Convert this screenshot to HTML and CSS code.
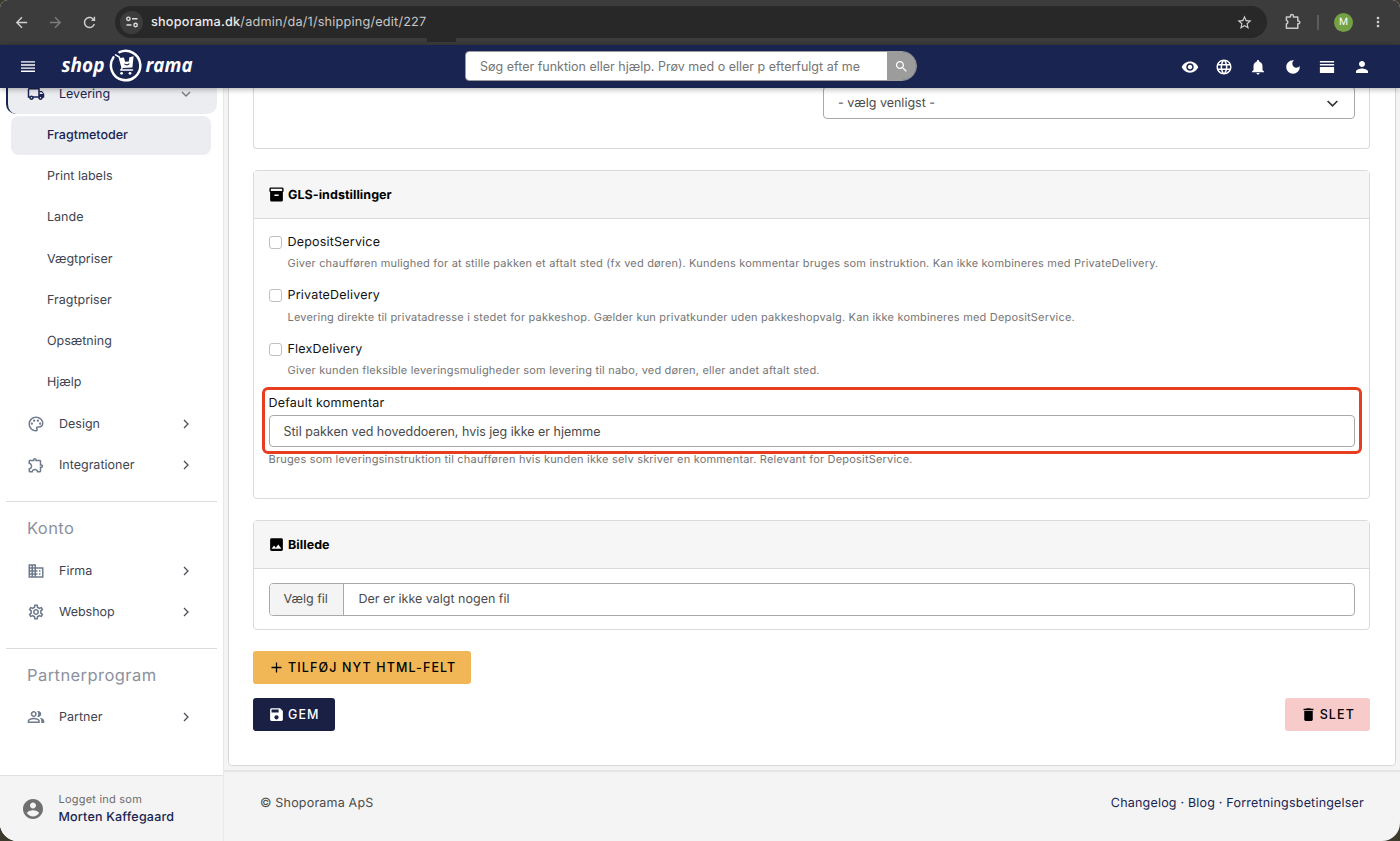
FILE: index.html
```html
<!DOCTYPE html>
<html lang="da">
<head>
    <meta charset="UTF-8">
    <meta name="viewport" content="width=device-width, initial-scale=1.0">
    <title>Shoporama</title>
    <link rel="stylesheet" href="styles.css">
</head>
<body>
<div class="window">
    <div class="browser-bar">
        <svg class="b-icon" viewBox="0 0 24 24"><path d="M20 11H7.83l5.59-5.59L12 4l-8 8 8 8 1.41-1.41L7.83 13H20v-2z"/></svg>
        <svg class="b-icon dim" viewBox="0 0 24 24"><path d="M12 4l-1.41 1.41L16.17 11H4v2h12.17l-5.58 5.59L12 20l8-8z"/></svg>
        <svg class="b-icon" viewBox="0 0 24 24"><path d="M17.65 6.35C16.2 4.9 14.21 4 12 4c-4.42 0-7.99 3.58-7.99 8s3.57 8 7.99 8c3.73 0 6.84-2.55 7.73-6h-2.08c-.82 2.33-3.04 4-5.65 4-3.31 0-6-2.69-6-6s2.69-6 6-6c1.66 0 3.14.69 4.22 1.78L14 10h6V4h-2v2.7z"/></svg>
        <div class="address">
            <span class="site-info">
                <svg viewBox="0 0 14 14"><g fill="none" stroke="#ddd" stroke-width="1.4"><circle cx="3.4" cy="3.8" r="1.7"/><path d="M7 3.8h5.5M1.5 10h5"/><circle cx="10.6" cy="10" r="1.7"/></g></svg>
            </span>
            <span class="url"><b>shoporama.dk</b>/admin/da/1/shipping/edit/227</span>
            <svg class="b-icon star" viewBox="0 0 24 24"><path d="M22 9.24l-7.19-.62L12 2 9.19 8.63 2 9.24l5.46 4.73L5.82 21 12 17.27 18.18 21l-1.63-7.03L22 9.24zM12 15.4l-3.76 2.27 1-4.28-3.32-2.88 4.38-.38L12 6.1l1.71 4.04 4.38.38-3.32 2.88 1 4.28L12 15.4z"/></svg>
            <span class="address-tab"></span>
        </div>
        <svg class="b-puzzle" viewBox="0 0 18 18"><path d="M2.4 4h4V2.9a1.5 1.5 0 0 1 3 0V4h4.4v4h.6a1.4 1.4 0 0 1 0 2.800h-.6v4.400H2.400v-4.300a1.900 1.900 0 0 0 0-3.700z" fill="none" stroke="#c9c9c9" stroke-width="1.500" stroke-linejoin="round"/></svg>
        <span class="b-divider"></span>
        <span class="avatar">M</span>
        <svg class="b-more" viewBox="0 0 24 24"><path d="M12 8c1.100 0 2-.9 2-2s-.9-2-2-2-2 .9-2 2 .9 2 2 2zm0 2c-1.100 0-2 .9-2 2s.9 2 2 2 2-.9 2-2-.9-2-2-2zm0 6c-1.100 0-2 .9-2 2s.9 2 2 2 2-.9 2-2-.9-2-2-2z"/></svg>
    </div>

    <header class="topbar">
        <svg class="menu-icon" viewBox="0 0 14 11"><path d="M0 .9h14M0 4h14M0 7.100h14M0 10.200h14" stroke="#fff" stroke-width="1.400"/></svg>
        <svg class="logo" viewBox="0 0 140 36">
            <text x="1.500" y="24" textLength="43" lengthAdjust="spacingAndGlyphs">shop</text>
            <text x="85.500" y="24" textLength="47" lengthAdjust="spacingAndGlyphs">rama</text>
            <g fill="none" stroke="#fff">
                <path d="M59.500 4.200A14.700 14.700 0 1 1 53.400 9.400" stroke-width="2.500" stroke-linecap="round"/>
                <path d="M55.500 6.800l3.700 2.200 3 10.800M60.800 22h11.700" stroke-width="1.500" stroke-linecap="round"/>
                <path d="M62.200 19.800l-1.400 2.200" stroke-width="1.200"/>
            </g>
            <path d="M59.500 10l4.300-.4 1.400 4.200 3.600-.2.600-4.300 4.200-1-1.200 11.200-10.600.6z" fill="#fff"/>
            <path d="M64.400 15.900q2.700 2 5 -.3" fill="none" stroke="#192450" stroke-width="1.100"/>
            <circle cx="61.600" cy="25.300" r="1.400" fill="#fff"/><circle cx="70" cy="25.300" r="1.400" fill="#fff"/>
        </svg>
        <form class="search">
            <input type="text" placeholder="Søg efter funktion eller hjælp. Prøv med o eller p efterfulgt af me">
            <button type="button">
                <svg viewBox="0 0 24 24"><path d="M15.500 14h-.79l-.28-.27C15.410 12.590 16 11.110 16 9.500 16 5.910 13.090 3 9.500 3S3 5.910 3 9.500 5.910 16 9.500 16c1.610 0 3.090-.59 4.230-1.570l.27.28v.79l5 4.990L20.490 19l-4.990-5zm-6 0C7.010 14 5 11.990 5 9.500S7.010 5 9.500 5 14 7.010 14 9.500 11.990 14 9.500 14z"/></svg>
            </button>
        </form>
        <div class="top-icons">
            <svg viewBox="0 0 24 24"><path d="M12 4.500C7 4.500 2.730 7.610 1 12c1.730 4.390 6 7.500 11 7.500s9.270-3.110 11-7.500c-1.730-4.390-6-7.500-11-7.500zM12 17c-2.760 0-5-2.240-5-5s2.240-5 5-5 5 2.240 5 5-2.240 5-5 5zm0-8c-1.660 0-3 1.340-3 3s1.340 3 3 3 3-1.340 3-3-1.340-3-3-3z"/></svg>
            <svg viewBox="0 0 24 24"><path d="M11.990 2C6.470 2 2 6.480 2 12s4.470 10 9.990 10C17.520 22 22 17.520 22 12S17.520 2 11.990 2zm6.930 6h-2.950c-.32-1.250-.78-2.450-1.380-3.560 1.840.63 3.370 1.910 4.330 3.560zM12 4.040c.83 1.200 1.480 2.530 1.910 3.960h-3.820c.43-1.430 1.080-2.760 1.910-3.960zM4.260 14C4.100 13.360 4 12.690 4 12s.1-1.360.26-2h3.380c-.08.66-.14 1.320-.14 2s.06 1.340.14 2H4.260zm.82 2h2.950c.32 1.250.78 2.450 1.380 3.560-1.840-.63-3.370-1.900-4.330-3.560zm2.950-8H5.080c.96-1.660 2.490-2.930 4.330-3.560C8.810 5.550 8.350 6.750 8.030 8zM12 19.960c-.83-1.200-1.480-2.530-1.910-3.960h3.820c-.43 1.430-1.080 2.760-1.910 3.960zM14.340 14H9.660c-.09-.66-.16-1.320-.16-2s.07-1.350.16-2h4.680c.09.65.16 1.320.16 2s-.07 1.340-.16 2zm.25 5.560c.6-1.110 1.060-2.310 1.380-3.560h2.950c-.96 1.650-2.490 2.930-4.330 3.560zM16.360 14c.08-.66.14-1.320.14-2s-.06-1.340-.14-2h3.380c.16.64.26 1.310.26 2s-.1 1.360-.26 2h-3.380z"/></svg>
            <svg viewBox="0 0 24 24"><path d="M12 22c1.100 0 2-.9 2-2h-4c0 1.100.89 2 2 2zm6-6v-5c0-3.070-1.640-5.640-4.500-6.320V4c0-.83-.67-1.500-1.500-1.500s-1.500.67-1.500 1.500v.68C7.630 5.360 6 7.920 6 11v5l-2 2v1h16v-1l-2-2z"/></svg>
            <svg viewBox="0 0 24 24"><path d="M12 3c-4.970 0-9 4.030-9 9s4.030 9 9 9 9-4.030 9-9c0-.46-.04-.92-.1-1.360-.98 1.370-2.580 2.260-4.400 2.260-2.980 0-5.400-2.420-5.400-5.400 0-1.810.89-3.420 2.260-4.400-.44-.06-.9-.1-1.360-.1z"/></svg>
            <svg viewBox="0 0 24 24"><path d="M2.500 4h19v2h-19zM2.500 8h19v2h-19zM2.500 12h19v8h-19z"/></svg>
            <svg viewBox="0 0 24 24"><path d="M12 12c2.210 0 4-1.790 4-4s-1.790-4-4-4-4 1.790-4 4 1.790 4 4 4zm0 2c-2.670 0-8 1.340-8 4v2h16v-2c0-2.660-5.330-4-8-4z"/></svg>
        </div>
    </header>

    <div class="layout">
        <aside class="sidebar">
            <nav class="menu">
                <a class="item open">
                    <svg class="item-icon" viewBox="0 0 24 24"><path d="M20 8h-3V4H3c-1.100 0-2 .9-2 2v11h2c0 1.660 1.340 3 3 3s3-1.340 3-3h6c0 1.660 1.340 3 3 3s3-1.340 3-3h2v-5l-3-4zm-.5 1.500l1.960 2.500H17V9.500h2.500zM6 18c-.55 0-1-.45-1-1s.45-1 1-1 1 .45 1 1-.45 1-1 1zm2.220-3c-.55-.61-1.330-1-2.220-1s-1.670.39-2.220 1H3V6h12v9H8.220zM18 18c-.55 0-1-.45-1-1s.45-1 1-1 1 .45 1 1-.45 1-1 1z"/></svg>
                    <span>Levering</span>
                    <svg class="arrow" viewBox="0 0 12 12"><path d="M2 4L6 8l4-4"/></svg>
                </a>
                <a class="sub active">Fragtmetoder</a>
                <a class="sub">Print labels</a>
                <a class="sub">Lande</a>
                <a class="sub">Vægtpriser</a>
                <a class="sub">Fragtpriser</a>
                <a class="sub">Opsætning</a>
                <a class="sub">Hjælp</a>
                <a class="item">
                    <svg class="item-icon" viewBox="0 0 24 24"><path d="M12 22C6.490 22 2 17.510 2 12S6.490 2 12 2s10 4.040 10 9c0 3.310-2.690 6-6 6h-1.770c-.28 0-.5.220-.5.500 0 .12.050.23.130.33.410.47.640 1.060.640 1.670 0 1.380-1.120 2.500-2.500 2.500zm0-18c-4.410 0-8 3.590-8 8s3.590 8 8 8c.28 0 .5-.22.5-.5 0-.16-.08-.28-.14-.35-.41-.46-.63-1.050-.63-1.650 0-1.380 1.120-2.500 2.500-2.500H16c2.210 0 4-1.790 4-4 0-3.860-3.590-7-8-7z"/><circle cx="6.500" cy="11.500" r="1.500"/><circle cx="9.500" cy="7.500" r="1.500"/><circle cx="14.500" cy="7.500" r="1.500"/><circle cx="17.500" cy="11.500" r="1.500"/></svg>
                    <span>Design</span>
                    <svg class="arrow" viewBox="0 0 12 12"><path d="M4 2L8 6 4 10"/></svg>
                </a>
                <a class="item">
                    <svg class="item-icon" viewBox="0 0 24 24"><path d="M10.500 4.500c.28 0 .5.220.5.500v2h6v6h2c.28 0 .5.220.5.500s-.22.500-.5.500h-2v6h-2.120c-.68-1.750-2.390-3-4.380-3s-3.700 1.250-4.380 3H4v-2.120c1.750-.68 3-2.390 3-4.380 0-1.990-1.240-3.700-2.990-4.380L4 7h6V5c0-.28.220-.5.500-.5m0-2C9.120 2.500 8 3.620 8 5H4c-1.100 0-1.990.9-1.990 2v3.800h.29c1.490 0 2.700 1.210 2.700 2.700s-1.210 2.700-2.700 2.700H2V20c0 1.100.9 2 2 2h3.800v-.3c0-1.490 1.210-2.700 2.700-2.700s2.700 1.210 2.700 2.700v.3H17c1.100 0 2-.9 2-2v-4c1.380 0 2.500-1.120 2.500-2.500S20.380 11 19 11V7c0-1.100-.9-2-2-2h-4c0-1.380-1.120-2.500-2.500-2.500z"/></svg>
                    <span>Integrationer</span>
                    <svg class="arrow" viewBox="0 0 12 12"><path d="M4 2L8 6 4 10"/></svg>
                </a>
                <h4 class="menu-title">Konto</h4>
                <a class="item">
                    <svg class="item-icon" viewBox="0 0 24 24"><path d="M12 7V3H2v18h20V7H12zM6 19H4v-2h2v2zm0-4H4v-2h2v2zm0-4H4V9h2v2zm0-4H4V5h2v2zm4 12H8v-2h2v2zm0-4H8v-2h2v2zm0-4H8V9h2v2zm0-4H8V5h2v2zm10 12h-8v-2h2v-2h-2v-2h2v-2h-2V9h8v10zm-2-8h-2v2h2v-2zm0 4h-2v2h2v-2z"/></svg>
                    <span>Firma</span>
                    <svg class="arrow" viewBox="0 0 12 12"><path d="M4 2L8 6 4 10"/></svg>
                </a>
                <a class="item">
                    <svg class="item-icon" viewBox="0 0 24 24"><path d="M19.430 12.980c.04-.32.07-.64.07-.98s-.03-.66-.07-.98l2.110-1.650c.19-.15.24-.42.12-.64l-2-3.460c-.09-.16-.26-.25-.44-.25-.06 0-.12.010-.17.030l-2.490 1c-.52-.4-1.080-.73-1.690-.98l-.38-2.650C14.460 2.180 14.250 2 14 2h-4c-.25 0-.46.18-.49.42l-.38 2.650c-.61.25-1.170.59-1.690.98l-2.490-1c-.06-.02-.12-.03-.18-.03-.17 0-.34.090-.43.250l-2 3.460c-.13.22-.07.49.12.64l2.110 1.650c-.04.32-.07.65-.07.98s.03.66.07.98l-2.110 1.650c-.19.15-.24.42-.12.64l2 3.460c.09.16.26.25.44.25.06 0 .12-.01.17-.03l2.490-1c.52.4 1.080.73 1.690.98l.38 2.650c.03.24.24.42.49.42h4c.25 0 .46-.18.49-.42l.38-2.650c.61-.25 1.170-.59 1.690-.98l2.490 1c.06.02.12.03.18.03.17 0 .34-.09.43-.25l2-3.460c.12-.22.07-.49-.12-.64l-2.110-1.650zm-1.980-1.710c.04.31.05.52.05.73 0 .21-.02.43-.05.73l-.14 1.130.89.7 1.080.84-.7 1.210-1.270-.51-1.040-.42-.9.68c-.43.32-.84.56-1.250.73l-1.060.43-.16 1.130-.2 1.350h-1.400l-.19-1.350-.16-1.130-1.060-.43c-.43-.18-.83-.41-1.230-.71l-.91-.7-1.060.43-1.270.51-.7-1.210 1.080-.84.89-.7-.14-1.130c-.03-.31-.05-.54-.05-.74s.02-.43.05-.73l.14-1.130-.89-.7-1.080-.84.7-1.210 1.270.51 1.040.42.9-.68c.43-.32.84-.56 1.250-.73l1.060-.43.16-1.130.2-1.350h1.390l.19 1.350.16 1.130 1.060.43c.43.18.83.41 1.230.71l.91.7 1.060-.43 1.270-.51.7 1.210-1.070.85-.89.7.14 1.130zM12 8c-2.210 0-4 1.790-4 4s1.790 4 4 4 4-1.790 4-4-1.790-4-4-4zm0 6c-1.100 0-2-.9-2-2s.9-2 2-2 2 .9 2 2-.9 2-2 2z"/></svg>
                    <span>Webshop</span>
                    <svg class="arrow" viewBox="0 0 12 12"><path d="M4 2L8 6 4 10"/></svg>
                </a>
                <h4 class="menu-title">Partnerprogram</h4>
                <a class="item">
                    <svg class="item-icon" viewBox="0 0 24 24"><path d="M16.670 13.130C18.040 14.060 19 15.320 19 17v3h4v-3c0-2.180-3.570-3.470-6.330-3.870zM15 12c2.210 0 4-1.790 4-4s-1.790-4-4-4c-.47 0-.91.1-1.330.24C14.500 5.270 15 6.580 15 8s-.5 2.730-1.330 3.760c.42.14.86.24 1.330.24zM9 12c2.210 0 4-1.790 4-4s-1.790-4-4-4-4 1.790-4 4 1.790 4 4 4zm0-6c1.100 0 2 .9 2 2s-.9 2-2 2-2-.9-2-2 .9-2 2-2zM9 13c-2.670 0-8 1.340-8 4v3h16v-3c0-2.660-5.330-4-8-4zm6 5H3v-.99C3.200 16.290 6.300 15 9 15s5.800 1.290 6 2v1z"/></svg>
                    <span>Partner</span>
                    <svg class="arrow" viewBox="0 0 12 12"><path d="M4 2L8 6 4 10"/></svg>
                </a>
            </nav>
            <div class="user">
                <svg viewBox="0 0 24 24"><path d="M12 2C6.480 2 2 6.480 2 12s4.480 10 10 10 10-4.480 10-10S17.520 2 12 2zm0 3.500c1.660 0 3 1.340 3 3s-1.340 3-3 3-3-1.340-3-3 1.340-3 3-3zm0 14c-2.500 0-4.710-1.280-6-3.220.03-1.990 4-3.080 6-3.080 1.990 0 5.970 1.090 6 3.080-1.290 1.940-3.500 3.220-6 3.220z"/></svg>
                <div>
                    <small>Logget ind som</small>
                    <strong>Morten Kaffegaard</strong>
                </div>
            </div>
        </aside>

        <div class="content">
            <main class="panel">
                <section class="card card-cut">
                    <div class="select">
                        <span>- vælg venligst -</span>
                        <svg viewBox="0 0 12 12"><path d="M1.500 3.700L6 8.200l4.500-4.500"/></svg>
                    </div>
                </section>

                <section class="card gls">
                    <h3 class="card-head">
                        <svg viewBox="0 0 24 24"><path d="M20 2H4c-1 0-2 .9-2 2v3.010c0 .72.43 1.340 1 1.690V20c0 1.100 1.100 2 2 2h14c.9 0 2-.9 2-2V8.700c.57-.35 1-.97 1-1.690V4c0-1.100-1-2-2-2zm-5 12H9v-2h6v2zm5-7H4V4h16v3z"/></svg>
                        <span>GLS-indstillinger</span>
                    </h3>
                    <div class="card-body">
                        <div class="check">
                            <input type="checkbox" id="deposit">
                            <label for="deposit">DepositService</label>
                            <p>Giver chaufføren mulighed for at stille pakken et aftalt sted (fx ved døren). Kundens kommentar bruges som instruktion. Kan ikke kombineres med PrivateDelivery.</p>
                        </div>
                        <div class="check">
                            <input type="checkbox" id="private">
                            <label for="private">PrivateDelivery</label>
                            <p>Levering direkte til privatadresse i stedet for pakkeshop. Gælder kun privatkunder uden pakkeshopvalg. Kan ikke kombineres med DepositService.</p>
                        </div>
                        <div class="check">
                            <input type="checkbox" id="flex">
                            <label for="flex">FlexDelivery</label>
                            <p>Giver kunden fleksible leveringsmuligheder som levering til nabo, ved døren, eller andet aftalt sted.</p>
                        </div>
                        <div class="highlight">
                            <label for="comment">Default kommentar</label>
                            <input type="text" id="comment" class="field" value="Stil pakken ved hoveddoeren, hvis jeg ikke er hjemme">
                        </div>
                        <p class="help">Bruges som leveringsinstruktion til chaufføren hvis kunden ikke selv skriver en kommentar. Relevant for DepositService.</p>
                    </div>
                </section>

                <section class="card image-card">
                    <h3 class="card-head">
                        <svg viewBox="0 0 24 24"><path d="M21 19V5c0-1.100-.9-2-2-2H5c-1.100 0-2 .9-2 2v14c0 1.100.9 2 2 2h14c1.100 0 2-.9 2-2zM8.500 13.500l2.500 3.010L14.500 12l4.500 6H5l3.500-4.500z"/></svg>
                        <span>Billede</span>
                    </h3>
                    <div class="card-body">
                        <div class="file">
                            <span class="file-button">Vælg fil</span>
                            <span class="file-name">Der er ikke valgt nogen fil</span>
                        </div>
                    </div>
                </section>

                <div class="actions">
                    <button class="btn btn-add"><svg viewBox="0 0 24 24"><path d="M19 12.900h-6.100V19h-1.800v-6.100H5v-1.800h6.100V5h1.800v6.100H19z"/></svg>TILFØJ NYT HTML-FELT</button>
                </div>
                <div class="actions">
                    <button class="btn btn-save"><svg viewBox="0 0 24 24"><path d="M17 3H5c-1.110 0-2 .9-2 2v14c0 1.100.89 2 2 2h14c1.100 0 2-.9 2-2V7l-4-4zm-5 16c-1.660 0-3-1.340-3-3s1.340-3 3-3 3 1.340 3 3-1.340 3-3 3zm3-10H5V5h10v4z"/></svg>GEM</button>
                    <button class="btn btn-delete"><svg viewBox="0 0 24 24"><path d="M6 19c0 1.100.9 2 2 2h8c1.100 0 2-.9 2-2V7H6v12zM19 4h-3.500l-1-1h-5l-1 1H5v2h14V4z"/></svg>SLET</button>
                </div>
            </main>
            <footer class="footer">
                <span>© Shoporama ApS</span>
                <span class="links"><a>Changelog</a> · <a>Blog</a> · <a>Forretningsbetingelser</a></span>
            </footer>
        </div>
    </div>
</div>
</body>
</html>
```

FILE: styles.css
```css
* {
    box-sizing: border-box;
}

body {
    margin: 0;
    background-color: #3b3a2c;
    font-family: Inter, "Liberation Sans", sans-serif;
    font-size: 12.5px;
    letter-spacing: 0.2px;
    color: #4a4a4a;
    text-rendering: geometricPrecision;
}

svg {
    display: block;
    flex: none;
}

.window {
    display: flex;
    flex-direction: column;
    height: 841px;
    border-radius: 8px 8px 18px 18px;
    overflow: hidden;
    background-color: #f4f4f4;
}

/* browser */
.browser-bar {
    display: flex;
    align-items: center;
    height: 45px;
    padding: 0 14px 1px 13px;
    background-color: #3c3c3c;
    flex: none;
}

.b-icon {
    width: 17px;
    height: 17px;
    margin-right: 17px;
    fill: #d0d0d0;
}

.b-icon.dim {
    fill: #7d7d7d;
}

.address {
    position: relative;
    display: flex;
    align-items: center;
    flex: 1;
    height: 32px;
    padding-left: 5px;
    border-radius: 16px;
    background-color: #282828;
}

.site-info {
    display: flex;
    align-items: center;
    justify-content: center;
    width: 23px;
    height: 23px;
    border-radius: 50%;
    background-color: #3c3c3c;
}

.site-info svg {
    width: 14px;
    height: 14px;
}

.url {
    flex: 1;
    margin-left: 8px;
    font-size: 12.7px;
    color: #c7c7c7;
}

.url b {
    font-weight: 500;
    color: #ececec;
}

.star {
    margin-right: 14px;
}

.address-tab {
    position: absolute;
    left: 312px;
    top: 30px;
    width: 29px;
    height: 6px;
    background-color: #282828;
}

.b-puzzle {
    width: 18px;
    height: 18px;
    margin-left: 17px;
}

.b-divider {
    width: 2px;
    height: 15px;
    margin: 0 15px 0 15px;
    background-color: #5c5c5c;
}

.avatar {
    width: 19px;
    height: 19px;
    border-radius: 50%;
    background-color: #74a046;
    color: #fff;
    font-size: 10px;
    line-height: 19px;
    text-align: center;
}

.b-more {
    width: 16px;
    height: 16px;
    margin-left: 17px;
    fill: #d0d0d0;
}

/* header */
.topbar {
    position: relative;
    z-index: 2;
    display: grid;
    grid-template-columns: 61px 404px 452px 1fr;
    align-items: center;
    height: 43px;
    flex: none;
    background-color: #192450;
    box-shadow: 0 1px 6px rgba(0, 0, 0, 0.35);
}

.menu-icon {
    width: 14px;
    height: 11px;
    margin-left: 21px;
}

.logo {
    width: 140px;
    height: 36px;
    margin: -2px 0 0 -1px;
}

.logo text {
    fill: #fff;
    font-family: "Open Sans", "Noto Sans", sans-serif;
    font-size: 20px;
    font-weight: 700;
    font-style: italic;
    letter-spacing: 0;
}

.search {
    display: flex;
    height: 30px;
    margin-top: -1px;
    border: 1px solid #9c9c9c;
    border-radius: 4px 15px 15px 4px;
    overflow: hidden;
}

.search input {
    flex: 1;
    padding: 0 14px;
    border: none;
    font-family: inherit;
    font-size: 12.5px;
    letter-spacing: 0;
}

.search input::placeholder {
    color: #757575;
}

.search button {
    width: 29px;
    padding: 0 0 0 7px;
    border: none;
    background-color: #9c9c9c;
}

.search button svg {
    width: 15px;
    height: 15px;
    fill: #fff;
}

.top-icons {
    display: flex;
    justify-content: flex-end;
    gap: 16.4px;
    padding-right: 29.5px;
}

.top-icons svg {
    width: 18px;
    height: 18px;
    fill: #fff;
}

.layout {
    display: flex;
    flex: 1;
    min-height: 0;
}

/* sidebar */
.sidebar {
    display: flex;
    flex-direction: column;
    width: 223px;
    flex: none;
    background-color: #fff;
}

.menu {
    display: flex;
    flex-direction: column;
    flex: 1;
    gap: 2px;
    min-height: 0;
    padding: 0 6px;
    overflow: hidden;
}

.menu .item.open {
    margin-top: -13.5px;
    border-left: 2px solid #192450;
    border-radius: 10px;
    background-color: #ecedf1;
    color: #192450;
    padding-left: 19px;
}

.item {
    display: flex;
    align-items: center;
    height: 39.25px;
    flex: none;
    padding: 0 25px 0 21px;
    color: #3d4450;
    letter-spacing: 0;
}

.item span {
    flex: 1;
    margin-left: 14px;
    padding-top: 1px;
}

.item-icon {
    width: 18px;
    height: 18px;
    fill: #6f7a8d;
}

.open .item-icon {
    fill: #192450;
}

.arrow {
    width: 12px;
    height: 12px;
    fill: none;
    stroke: #4a4f58;
    stroke-width: 1.3;
}

.open .arrow {
    stroke: #777;
}

.sub {
    height: 39.25px;
    flex: none;
    margin: 0 6px 0 5px;
    padding-left: 36px;
    border-radius: 8px;
    color: #3d4450;
    line-height: 40px;
    letter-spacing: 0;
}

.sub.active {
    background-color: #ecedf1;
    color: #192450;
    font-weight: 500;
}

.menu-title {
    flex: none;
    height: 48px;
    margin: 14px 0 0;
    padding-left: 21px;
    border-top: 1px solid #dcdcdc;
    color: #8c919e;
    font-size: 16.5px;
    font-weight: 400;
    line-height: 53px;
    letter-spacing: 0.43px;
}

.user {
    display: flex;
    align-items: center;
    height: 66px;
    padding-left: 21px;
    border-top: 1px solid #e0e0e0;
    background-color: #f4f4f4;
}

.user svg {
    width: 24px;
    height: 24px;
    margin-right: 13.5px;
    fill: #707070;
}

.user small,
.user strong {
    display: block;
    line-height: 18px;
}

.user small {
    color: #6b6b6b;
    font-size: 11px;
    letter-spacing: 0.22px;
}

.user strong {
    padding-top: 1px;
    color: #192450;
    font-size: 12.5px;
    font-weight: 500;
}

/* page */
.content {
    display: flex;
    flex-direction: column;
    flex: 1;
    border-left: 1px solid #e9e9e9;
}

.panel {
    flex: 1;
    margin: -4px 4px 4px;
    padding: 0 25px 0 24px;
    border: 1px solid #d8d8d8;
    border-radius: 4px;
    background-color: #fff;
}

.card {
    margin-bottom: 21px;
    border: 1px solid #dadada;
    border-radius: 4px;
}

.card-cut {
    display: flex;
    justify-content: flex-end;
    height: 64px;
    padding: 1px 14px;
    border-top: none;
}

.gls {
    height: 329px;
}

.image-card {
    height: 110px;
}

.select {
    display: flex;
    align-items: center;
    justify-content: space-between;
    width: 532px;
    height: 33px;
    padding: 1px 15px 0 14px;
    border: 1px solid #a9a9a9;
    border-radius: 4px;
    letter-spacing: 0;
}

.select svg {
    width: 13px;
    height: 13px;
    fill: none;
    stroke: #333;
    stroke-width: 1.5;
}

.card-head {
    display: flex;
    align-items: center;
    gap: 3px;
    height: 48px;
    margin: 0;
    padding-left: 14px;
    border-bottom: 1px solid #dadada;
    background-color: #f6f6f6;
    color: #000;
    font-size: 12.5px;
    font-weight: 700;
    letter-spacing: 0.05px;
}

.card-head span {
    padding-top: 1px;
}

.card-head svg {
    width: 17px;
    height: 17px;
    margin-top: -1px;
}

.card-body {
    padding: 14px 14px 0 14.5px;
}

.gls .card-body {
    padding-top: 13px;
}

.check {
    display: grid;
    grid-template-columns: 19px 1fr;
    grid-template-rows: 20px 22px;
    align-items: center;
    height: 53.6px;
}

.check input {
    appearance: none;
    width: 13px;
    height: 13px;
    margin: 0;
    border: 1px solid #bfbfbf;
    border-radius: 3px;
}

.check label,
.highlight label {
    color: #111;
}

.check p,
.help {
    grid-column: 2;
    margin: 0;
    color: #757575;
    font-size: 11px;
    letter-spacing: 0.19px;
}

.highlight {
    display: flex;
    flex-direction: column;
    height: 67px;
    margin: -6px -7px 0;
    padding: 5px 4px 4px;
    border: 3px solid #e63e1e;
    border-radius: 6px;
}

.highlight label {
    height: 21px;
    line-height: 17px;
}

.field {
    width: 100%;
    height: 33px;
    padding: 1px 14px 0;
    border: 1px solid #a9a9a9;
    border-radius: 4px;
    color: #4a4a4a;
    font-family: inherit;
    font-size: 12.5px;
    letter-spacing: 0;
}

.help {
    line-height: 11px;
}

.file {
    display: flex;
    height: 33px;
    border: 1px solid #a9a9a9;
    border-radius: 4px;
    line-height: 31px;
    letter-spacing: 0;
    overflow: hidden;
}

.file-button {
    width: 74px;
    padding-left: 14px;
    border-right: 1px solid #a9a9a9;
    background-color: #f4f4f4;
}

.file-name {
    padding-left: 15px;
}

.actions {
    display: flex;
    justify-content: space-between;
    margin-bottom: 14px;
}

.btn {
    display: flex;
    align-items: center;
    height: 33px;
    padding: 0 15px;
    border: none;
    border-radius: 3px;
    font-family: inherit;
    font-size: 12.5px;
    font-weight: 500;
    letter-spacing: 1.12px;
}

.btn svg {
    width: 17px;
    height: 17px;
    margin-right: 3px;
    fill: currentColor;
}

.btn-add {
    background-color: #f1b656;
    color: #000;
}

.btn-save {
    background-color: #192044;
    color: #fff;
}

.btn-delete {
    background-color: #f7cbca;
    color: #000;
}

.footer {
    display: flex;
    justify-content: space-between;
    height: 71px;
    flex: none;
    padding: 24px 36px 0;
    border-top: 2px solid #e5e5e5;
    line-height: 16px;
    letter-spacing: 0.2px;
}

.links {
    color: #192450;
}
```
